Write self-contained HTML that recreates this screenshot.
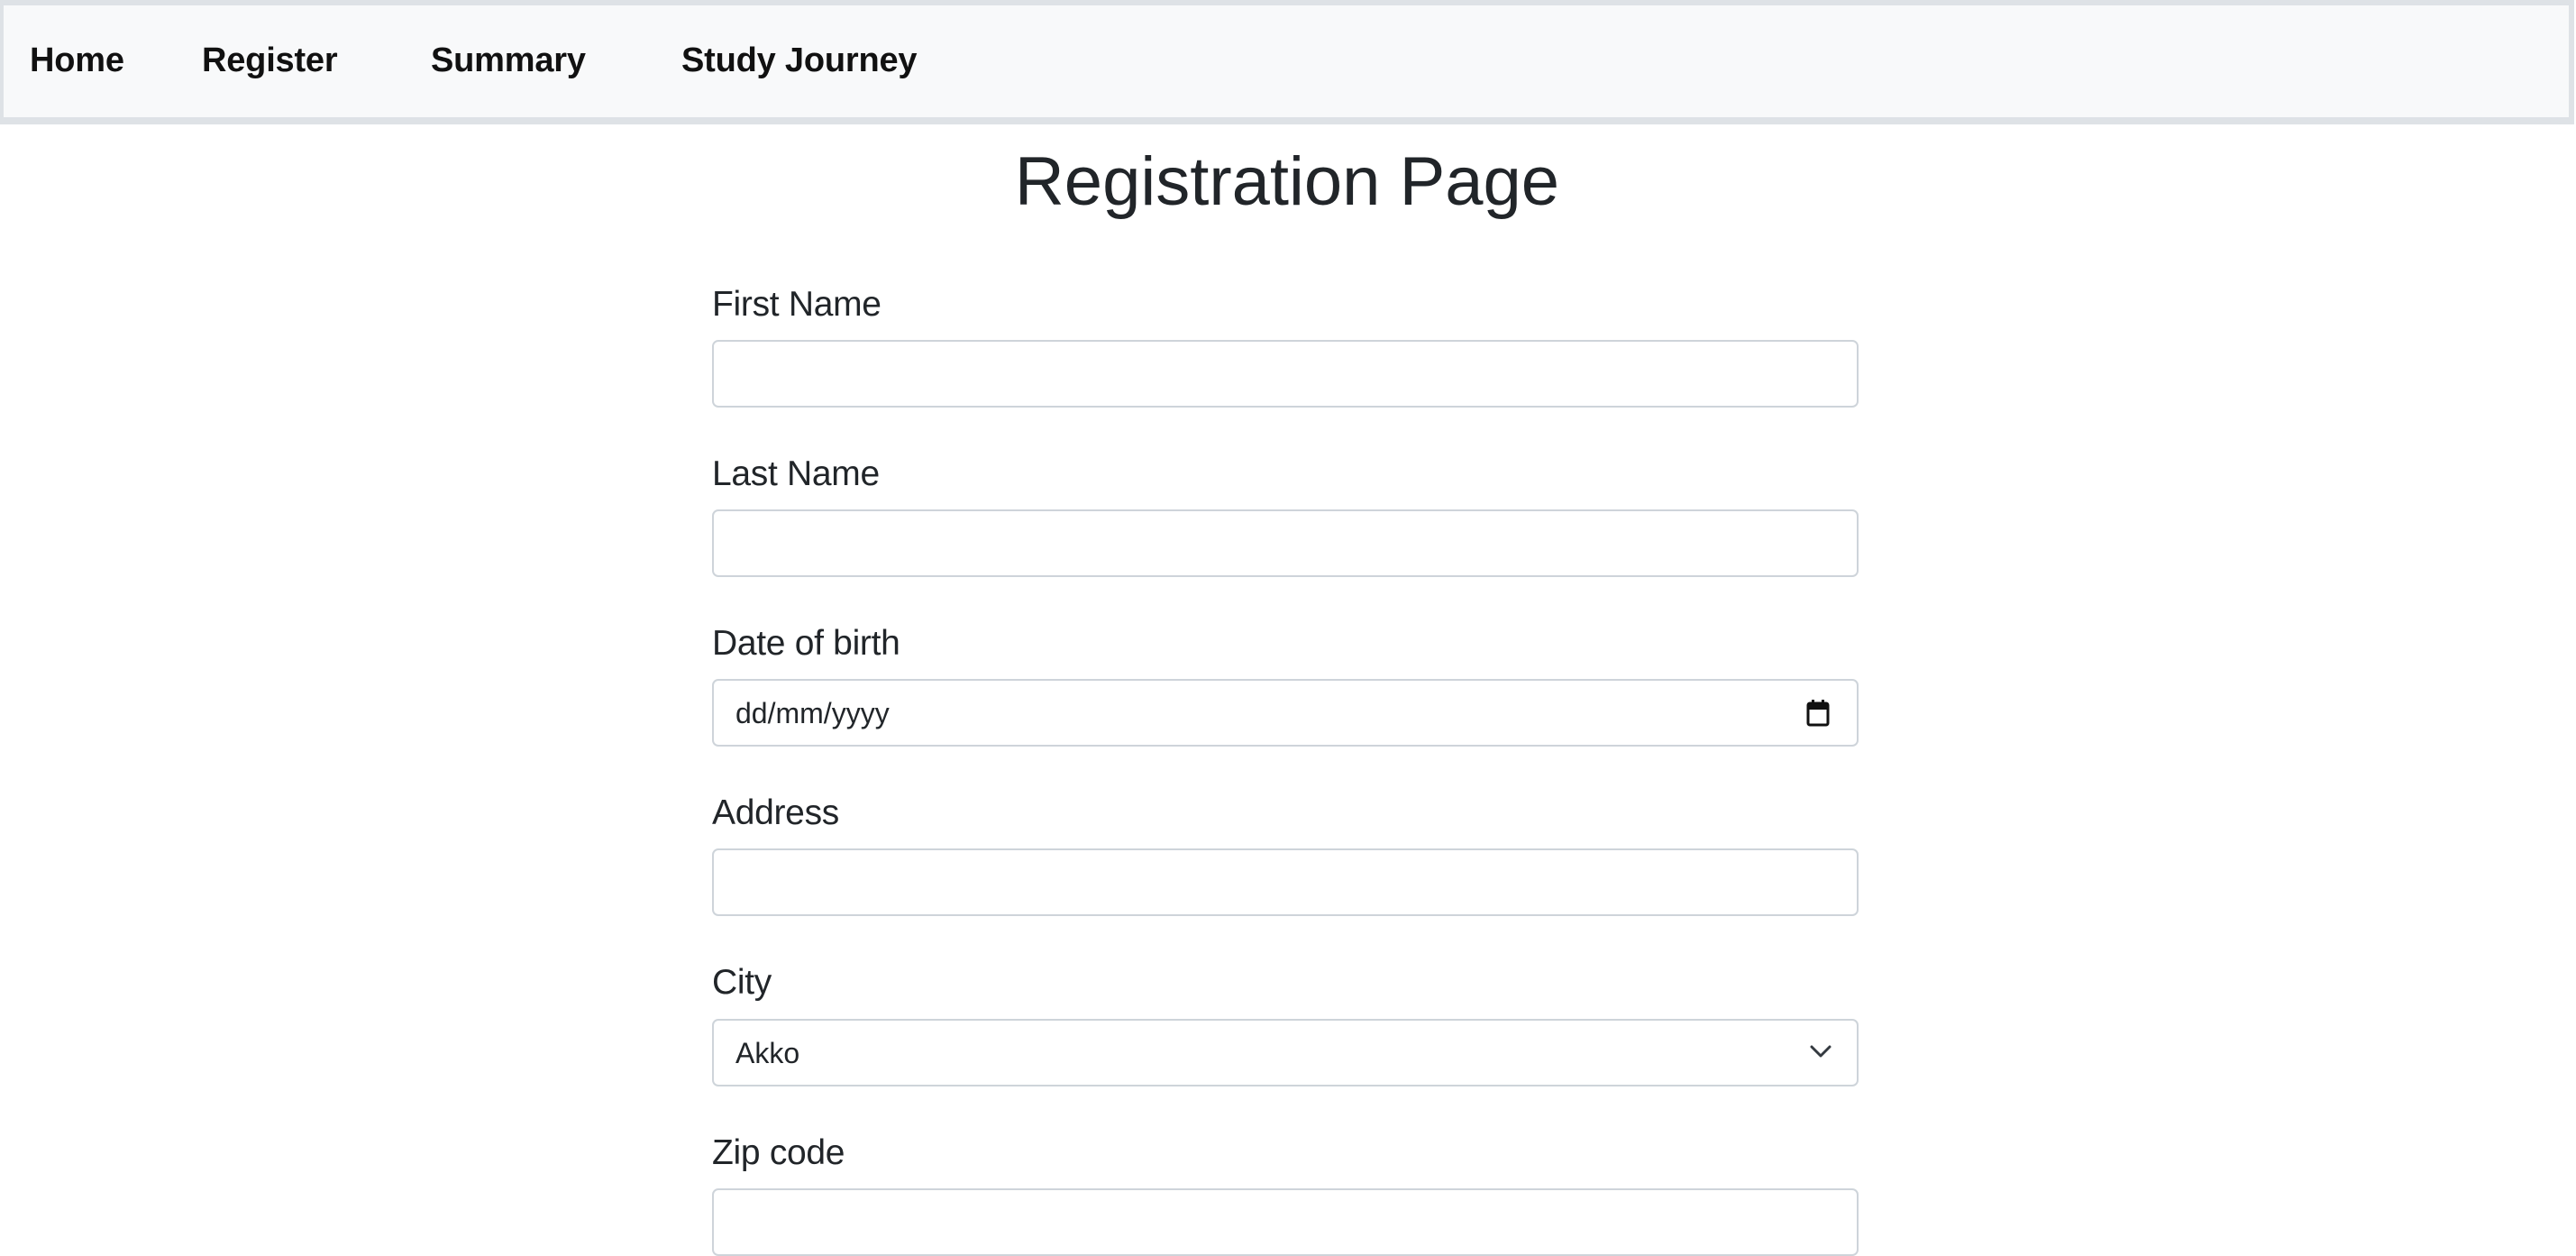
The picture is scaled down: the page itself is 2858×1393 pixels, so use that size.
<!DOCTYPE html>
<html><head><meta charset="utf-8"><style>
html,body{margin:0;padding:0;width:2858px;height:1376px;overflow:hidden;background:#fff;font-family:"Liberation Sans",Arial,sans-serif;color:#212529}
.nav{position:absolute;left:0;top:0;width:2846px;height:124px;background:#f8f9fa;border:6px solid #dee2e6;border-left-width:4px;border-bottom-width:8px}
.nav a{position:absolute;top:40px;font-weight:bold;font-size:38px;color:#111;text-decoration:none;letter-spacing:-0.2px}
h1{position:absolute;left:0;width:2856px;text-align:center;top:154px;margin:0;font-weight:normal;font-size:76px;line-height:96px;color:#212529}
.lab{position:absolute;left:790px;font-size:39px;color:#212529;letter-spacing:-0.3px}
.inp{position:absolute;left:790px;width:1268px;height:71px;border:2px solid #ced4da;border-radius:7px;background:#fff}
.val{position:absolute;left:24px;top:18px;font-size:32px;color:#212529}
</style></head><body>
<div class="nav">
<a style="left:29px">Home</a>
<a style="left:220px">Register</a>
<a style="left:474px">Summary</a>
<a style="left:752px">Study Journey</a>
</div>
<h1>Registration Page</h1>
<div class="lab" style="top:316px">First Name</div>
<div class="inp" style="top:377px"></div>
<div class="lab" style="top:504px">Last Name</div>
<div class="inp" style="top:565px"></div>
<div class="lab" style="top:692px">Date of birth</div>
<div class="inp" style="top:753px"><span class="val">dd/mm/yyyy</span>
<svg style="position:absolute;left:1211px;top:20px" width="28" height="32" viewBox="0 0 28 32"><rect x="3" y="5" width="22" height="24" rx="2" fill="none" stroke="#111" stroke-width="3"/><rect x="3" y="5" width="22" height="7" fill="#111"/><rect x="7" y="1" width="3" height="6" fill="#111"/><rect x="18" y="1" width="3" height="6" fill="#111"/></svg></div>
<div class="lab" style="top:880px">Address</div>
<div class="inp" style="top:941px"></div>
<div class="lab" style="top:1068px">City</div>
<div class="inp" style="top:1130px"><span class="val">Akko</span>
<svg style="position:absolute;left:1216px;top:26px" width="24" height="16" viewBox="0 0 24 16"><path d="M2 3 L12 13 L22 3" fill="none" stroke="#343a40" stroke-width="3" stroke-linecap="round" stroke-linejoin="round"/></svg></div>
<div class="lab" style="top:1257px">Zip code</div>
<div class="inp" style="top:1318px"></div>
</body></html>
